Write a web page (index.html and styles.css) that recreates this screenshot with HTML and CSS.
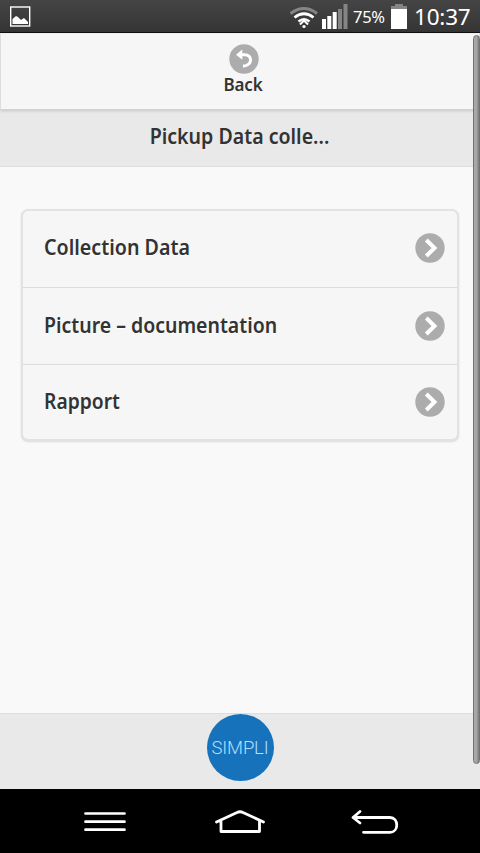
FILE: index.html
```html
<!DOCTYPE html>
<html lang="en">
<head>
<meta charset="utf-8">
<meta name="viewport" content="width=device-width">
<title>Pickup Data</title>
<link rel="stylesheet" href="styles.css">
</head>
<body>
<div class="status">
  <svg class="status-picture" width="22" height="22" viewBox="0 0 22 22"><rect x=".7" y="1" width="19" height="19" fill="none" stroke="#fff" stroke-width="1.4"/><path d="M2.500 18V13L6 10L8 11L11 14L14 12L18 16V18Z" fill="#fff"/></svg>
  <svg class="status-wifi" width="30" height="24" viewBox="0 0 30 24" fill="none"><path d="M.5 7.500Q14 -2.500 27 7.500" stroke="#858585" stroke-width="3"/><path d="M4.500 11.500Q14 4 23.500 11.500" stroke="#fff" stroke-width="2.700"/><path d="M8.500 15.500Q14 11 19.500 15.500" stroke="#fff" stroke-width="2.500"/><path d="M10 18.500L14 14.500L18 18.500" stroke="#fff" stroke-width="2"/><circle cx="14" cy="20.500" r="1.600" fill="#fff"/></svg>
  <svg class="status-signal" width="26" height="25" viewBox="0 0 26 25"><path d="M0 15H4V25H0ZM5.300 12H9.300V25H5.300ZM10.700 8H14.700V25H10.700Z" fill="#fff"/><path d="M16 5H20V25H16ZM21.500 0H25.500V25H21.500Z" fill="#858585"/></svg>
  <span class="percent">75%</span>
  <svg class="status-battery" width="16" height="25" viewBox="0 0 16 25"><path d="M4 0H12V2H16V5H0V2H4Z" fill="#858585"/><path d="M0 5H16V25H0Z" fill="#fff"/></svg>
  <span class="clock">10:37</span>
</div>
<main class="page">
  <div class="navbar">
    <svg width="30" height="30" viewBox="0 0 30 30"><circle cx="15" cy="15" r="14.700" fill="#acacac"/><path d="M12 10.700H15.500C23.800 10.700 24 21 14 22.300" fill="none" stroke="#fff" stroke-width="3"/><path d="M7 10.700L13.300 5.500V15.800Z" fill="#fff"/></svg>
    <span class="back-label">Back</span>
  </div>
  <header class="header"><h1 class="title">Pickup Data colle...</h1></header>
  <section class="content">
    <ul class="list">
      <li class="row"><span class="label label-collection">Collection Data</span><svg class="chevron" width="30" height="30" viewBox="0 0 30 30"><circle cx="15" cy="15" r="14.700" fill="#acacac"/><path d="M11.300 7L19.500 15L11.300 23" fill="none" stroke="#fff" stroke-width="4"/></svg></li>
      <li class="row"><span class="label label-picture">Picture – documentation</span><svg class="chevron" width="30" height="30" viewBox="0 0 30 30"><circle cx="15" cy="15" r="14.700" fill="#acacac"/><path d="M11.300 7L19.500 15L11.300 23" fill="none" stroke="#fff" stroke-width="4"/></svg></li>
      <li class="row"><span class="label label-rapport">Rapport</span><svg class="chevron" width="30" height="30" viewBox="0 0 30 30"><circle cx="15" cy="15" r="14.700" fill="#acacac"/><path d="M11.300 7L19.500 15L11.300 23" fill="none" stroke="#fff" stroke-width="4"/></svg></li>
    </ul>
  </section>
  <footer class="footer"><div class="logo"><span>SIMPLI</span></div></footer>
  <div class="scrollbar"></div>
</main>
<nav class="system">
  <svg width="42" height="22" viewBox="0 0 42 22"><path d="M1.500 2.500H40.500M1.500 10.700H40.500M1.500 18.700H40.500" stroke="#fff" stroke-width="2.700" stroke-linecap="round"/></svg>
  <svg width="52" height="24" viewBox="0 0 52 24"><path d="M2.500 12L23 2.500Q26 1 29 2.500L49.500 12M7 10.500V21.500H45.500V10.500" fill="none" stroke="#fff" stroke-width="2.800" stroke-linecap="round" stroke-linejoin="round"/></svg>
  <svg width="48" height="26" viewBox="0 0 48 26"><path d="M9 2.500L2 8.500L9 14M2.500 8.500H39C48 8.500 48 23.300 39 23.300H12.500" fill="none" stroke="#fff" stroke-width="2.800" stroke-linecap="round" stroke-linejoin="round"/></svg>
</nav>
</body>
</html>
```
FILE: styles.css
```css
* { box-sizing: border-box; }
body { margin: 0; width: 480px; height: 853px; overflow: hidden; display: flex; flex-direction: column; background: #f9f9f9; color: #333; font-family: "Noto Sans", sans-serif; }
svg { display: block; flex: none; }
span, h1 { white-space: nowrap; }
.status { height: 33px; flex: none; display: flex; align-items: flex-start; padding: 4px 0 0 10px; background: linear-gradient(#454545, #353535); border-bottom: 1px solid #111; color: #fff; }
.status-picture { margin-top: 2px; }
.status-wifi { margin: 2px 0 0 258px; }
.status-signal { margin-left: 2px; }
.percent { width: 32px; margin-left: 5px; font-size: 16.5px; line-height: 26px; letter-spacing: -.3px; }
.status-battery { margin-left: 6px; }
.clock { margin-left: 7px; font-size: 22.5px; line-height: 26px; letter-spacing: -.2px; }
.page { position: relative; height: 756px; flex: none; display: flex; flex-direction: column; }
.navbar { height: 77px; padding: 11px 0 0 8px; display: flex; flex-direction: column; align-items: center; background: #f6f6f6; border: 1px solid #ddd; border-top-color: #eee; border-bottom-color: #d3d3d3; box-shadow: 0 1px 3px rgba(0,0,0,.15); position: relative; }
.navbar svg { margin-top: -1px; }
.back-label { margin-left: -2px; font-size: 17px; line-height: 22px; font-weight: 600; letter-spacing: -.2px; }
.header { height: 57px; padding-top: 11px; background: #e9e9e9; border-bottom: 1px solid #ddd; text-align: center; }
.title { margin: 0 1px 0 0; font-size: 21px; line-height: 31px; font-weight: 600; text-shadow: 0 1px 0 #eee; transform: scaleX(.932); }
.content { flex: 1; padding: 42px 21px 0; background: #f9f9f9; }
.list { margin: 0; padding: 0; width: 438px; list-style: none; background: #f6f6f6; border: 2px solid #e2e2e2; border-radius: 7px; box-shadow: 0 1px 2px rgba(0,0,0,.13); }
.row { height: 77px; padding: 0 12px 1px 21px; display: flex; align-items: center; justify-content: space-between; border-bottom: 1px solid #dcdcdc; font-size: 21px; font-weight: 600; text-shadow: 0 1px 0 #fff; }
.row:first-child { padding-bottom: 2px; }
.row:last-child { height: 74px; padding-bottom: 0; border-bottom: 0; }
.label { margin-top: -2px; transform-origin: left center; }
.label-collection { margin-top: -3px; transform: scaleX(.937); }
.label-picture { transform: scaleX(.928); }
.label-rapport { transform: scaleX(.917); }
.footer { height: 76px; flex: none; display: flex; justify-content: center; background: #e9e9e9; border-top: 1px solid #ddd; }
.logo { width: 67px; height: 67px; display: flex; align-items: center; justify-content: center; border-radius: 50%; background: #1672ba; color: #b1dfff; font: 300 18.5px/22px Roboto, sans-serif; letter-spacing: -.2px; }
.scrollbar { position: absolute; top: 2px; right: 0; width: 7px; height: 729px; border: 1px solid #727272; border-radius: 4px; background: linear-gradient(90deg, #aaa, #a4a4a4 55%, #777); }
.system { height: 64px; display: flex; align-items: center; gap: 88px; padding: 2px 0 0 84px; background: #000; }
.system svg:last-child { margin-left: -3px; }
```
